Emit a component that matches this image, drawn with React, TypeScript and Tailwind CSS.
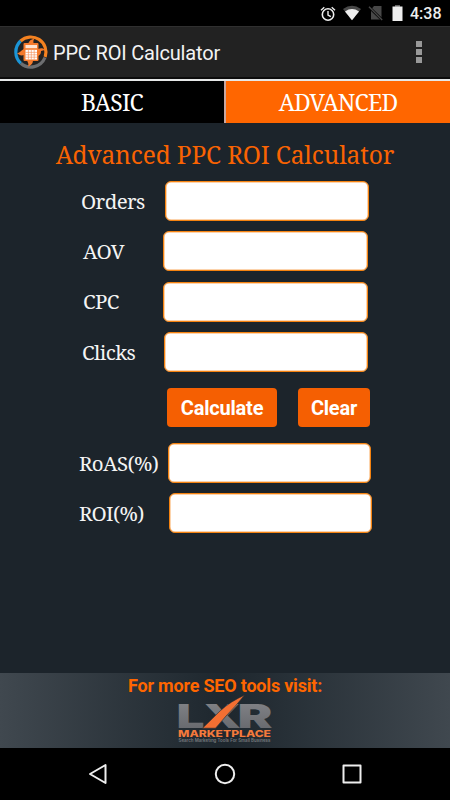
import type { ReactNode } from 'react';
import { clsx } from 'clsx';

const serif = "font-['Noto_Serif','DejaVu_Serif_Condensed','DejaVu_Serif',serif] [font-stretch:condensed]";

function StatusBar() {
  return (
    <div className="flex h-[26px] shrink-0 items-center bg-black pl-[320px] text-[#eee]">
      <svg width="16" height="16" viewBox="0 0 16 16" fill="none" stroke="currentColor" className="mt-0.5">
        <circle cx="8" cy="8.5" r="5.7" strokeWidth="1.6" />
        <path d="M1 4.2 4.3 1.2M15 4.2l-3.3-3M8 5v4l2.8 1.7" strokeWidth="1.4" />
      </svg>
      <svg width="20" height="16" viewBox="0 0 20 16" className="ml-[6px]">
        <path d="M1 4Q10-2.6 19 4L10 15.3Z" fill="#484848" />
        <path d="M3 6.4Q10 1.8 17 6.4L10 15.3Z" fill="currentColor" />
      </svg>
      <svg width="16" height="16" viewBox="0 0 16 16" className="ml-[6px]">
        <path d="M6 1h7.5v13.5H3V4.4Z" fill="#484848" />
        <path d="M1.2 2.2 14.5 15.3" stroke="#000" strokeWidth="2.6" />
        <path d="M1 1.8 14.2 15" stroke="#484848" strokeWidth="1.4" />
      </svg>
      <svg width="11" height="17" viewBox="0 0 11 17" className="ml-[8px]">
        <path d="M3 0h5v2H3Z" fill="#666" />
        <path d="M.5 1.5h10V16H.5Z" fill="currentColor" />
      </svg>
      <span className="ml-[7px] mt-[2px] font-['Roboto',sans-serif] text-[16px] font-medium leading-none">4:38</span>
    </div>
  );
}

function AppIcon() {
  return (
    <svg width="36" height="36" viewBox="0 0 36 36" fill="none">
      <g strokeWidth="3.2">
        <path d="M7.5 7A15.2 15.2 0 0 1 32.2 23" stroke="#f58220" />
        <path d="M32 23.5A15.2 15.2 0 0 1 7.8 29.2" stroke="#6d6e70" />
        <path d="M7.8 29.2A15.2 15.2 0 0 1 7.5 7" stroke="#1b95d6" />
      </g>
      <g fill="#f47a2c">
        <path d="M15 10c1-3 3-5 7-5.5-2 1-2 3-1 6.5Z" />
        <path d="M25 15c3-1 5-1 7 1l-4 1c0 3-1 4-3 5Z" />
        <path d="M20 26c0 3-1 5-5 6.5 1-2 0-4-1-6Z" />
        <path d="M11 21c-3 1-5 0-7-2 3 0 3-2 7-4Z" />
        <rect x="10.5" y="9" width="15" height="18" rx="1" />
      </g>
      <rect x="12.5" y="11" width="11.5" height="3.2" fill="#fde3d2" />
      <path d="M12.5 15.8h11.5v9.7H12.5Z" fill="#fff" />
      <path d="M15.4 16v9.5M18.3 16v9.5M21.2 16v9.5M12.5 18.4H24M12.5 20.8H24M12.5 23.2H24" stroke="#f58a50" strokeWidth=".6" />
    </svg>
  );
}

function ActionBar() {
  return (
    <header className="flex h-[53px] shrink-0 items-center border-t border-b-2 border-t-[#303030] border-b-[#0c0c0c] bg-[#222] pl-[13px] pr-[28px]">
      <AppIcon />
      <h1 className="ml-[4px] mt-[2px] font-['Roboto',sans-serif] text-[20px] tracking-[-0.18px] text-[#f3f3f3]">PPC ROI Calculator</h1>
      <div className="ml-auto flex flex-col gap-[2px]">
        <i className="h-[6px] w-[6px] bg-[#999]" />
        <i className="h-[6px] w-[6px] bg-[#999]" />
        <i className="h-[6px] w-[6px] bg-[#999]" />
      </div>
    </header>
  );
}

function Tabs() {
  return (
    <div className={clsx('flex h-[44px] shrink-0 border-t-2 border-[#e6e8e8] text-[23px] tracking-[-0.8px] text-white', serif)}>
      <div className="flex w-[224px] items-center justify-center bg-black">BASIC</div>
      <div className="w-[2px] bg-[#c9a7a0]" />
      <div className="flex flex-1 items-center justify-center bg-[#ff6600]">ADVANCED</div>
    </div>
  );
}

interface FieldProps {
  label: string;
  className: string;
  inputClassName: string;
}

function Field({ label, className, inputClassName }: FieldProps) {
  return (
    <label className={clsx('flex h-[40px] items-center text-[20.5px] tracking-[-0.6px] text-[#f4f4f4]', serif, className)}>
      <span className="flex-1 whitespace-nowrap">{label}</span>
      <input
        className={clsx(
          'h-[40px] rounded-[6px] border border-[#f5820f] bg-white shadow-[inset_0_0_0_0.5px_#f9a85a] outline-none',
          inputClassName
        )}
      />
    </label>
  );
}

function Button({ className, children }: { className: string; children: ReactNode }) {
  return (
    <button className={clsx("h-[39px] rounded-[4px] bg-[#f55f02] font-['Roboto',sans-serif] text-[20px] font-bold tracking-[-0.2px] text-white", className)}>
      {children}
    </button>
  );
}

function Logo() {
  return (
    <svg width="96" height="52" viewBox="0 0 96 52" className="overflow-visible font-['Inter',sans-serif]">
      <defs>
        <linearGradient id="steel" x1="0" y1="0" x2="0" y2="1">
          <stop offset="0" stopColor="#85868a" />
          <stop offset="1" stopColor="#626469" />
        </linearGradient>
      </defs>
      <g fill="url(#steel)" fontSize="32.5" fontWeight="900">
        <text x="-.5" y="32" textLength="28" lengthAdjust="spacingAndGlyphs">L</text>
        <text x="26" y="32" textLength="38" lengthAdjust="spacingAndGlyphs">X</text>
        <text x="60.5" y="32" textLength="35" lengthAdjust="spacingAndGlyphs">R</text>
      </g>
      <path d="M25.5 32.2Q36 22 43 15 54 5 67.5-.8 58 11 49 20L38.5 32.2Z" fill="#f36f32" stroke="#242c33" strokeWidth=".6" />
      <text x="1" y="40.8" fontSize="9.2" fontWeight="800" fill="#f47a3c" textLength="93" lengthAdjust="spacingAndGlyphs">MARKETPLACE</text>
      <text x="1.5" y="46" fontSize="5" fontWeight="600" fill="#76797d" textLength="92" lengthAdjust="spacingAndGlyphs">Search Marketing Tools For Small Business</text>
    </svg>
  );
}

function NavBar() {
  return (
    <nav className="flex h-[52px] shrink-0 items-center justify-between bg-black px-[87px] text-[#eee]">
      <svg width="22" height="22" viewBox="0 0 22 22" fill="none" stroke="currentColor" strokeWidth="2" strokeLinejoin="round">
        <path d="M18.5 2v18L3 11Z" />
      </svg>
      <svg width="22" height="22" viewBox="0 0 22 22" fill="none" stroke="currentColor" strokeWidth="2">
        <circle cx="11" cy="11" r="9.2" />
      </svg>
      <svg width="22" height="22" viewBox="0 0 22 22" fill="none" stroke="currentColor" strokeWidth="2" strokeLinejoin="round">
        <path d="M2.5 2.5h17v17h-17Z" />
      </svg>
    </nav>
  );
}

export default function App() {
  return (
    <div className="flex h-[800px] w-[450px] flex-col overflow-hidden bg-[#1c242b]">
      <StatusBar />
      <ActionBar />
      <Tabs />
      <main className="flex flex-1 flex-col">
        <h2 className={clsx('mt-[16px] text-center text-[24.5px] leading-[32px] tracking-[-0.14px] text-[#f96302]', serif)}>
          Advanced PPC ROI Calculator
        </h2>
        <div className="mt-[10px] flex flex-col gap-[10.4px]">
          <Field label="Orders" className="ml-[81px]" inputClassName="mr-[81px] w-[204px]" />
          <Field label="AOV" className="ml-[83px]" inputClassName="mr-[82px] w-[205px]" />
          <Field label="CPC" className="ml-[83px]" inputClassName="mr-[82px] w-[205px]" />
          <Field label="Clicks" className="ml-[82px]" inputClassName="mr-[82px] w-[204px]" />
        </div>
        <div className="ml-[167px] mt-[16px] flex gap-[21px]">
          <Button className="w-[110px]">Calculate</Button>
          <Button className="w-[72px]">Clear</Button>
        </div>
        <div className="mt-[16px] flex flex-col gap-[10px]">
          <Field label="RoAS(%)" className="ml-[79px]" inputClassName="mr-[79px] w-[203px]" />
          <Field label="ROI(%)" className="ml-[79px]" inputClassName="mr-[78px] w-[203px]" />
        </div>
      </main>
      <footer className="flex h-[75px] shrink-0 flex-col items-center bg-linear-to-r from-[#40484f] via-[#1e272e] to-[#40484f]">
        <p className="mt-[3px] h-[20px] font-['Roboto',sans-serif] text-[18px] font-bold leading-[20px] tracking-[-0.2px] text-[#ff6600]">
          For more SEO tools visit:
        </p>
        <Logo />
      </footer>
      <NavBar />
    </div>
  );
}
